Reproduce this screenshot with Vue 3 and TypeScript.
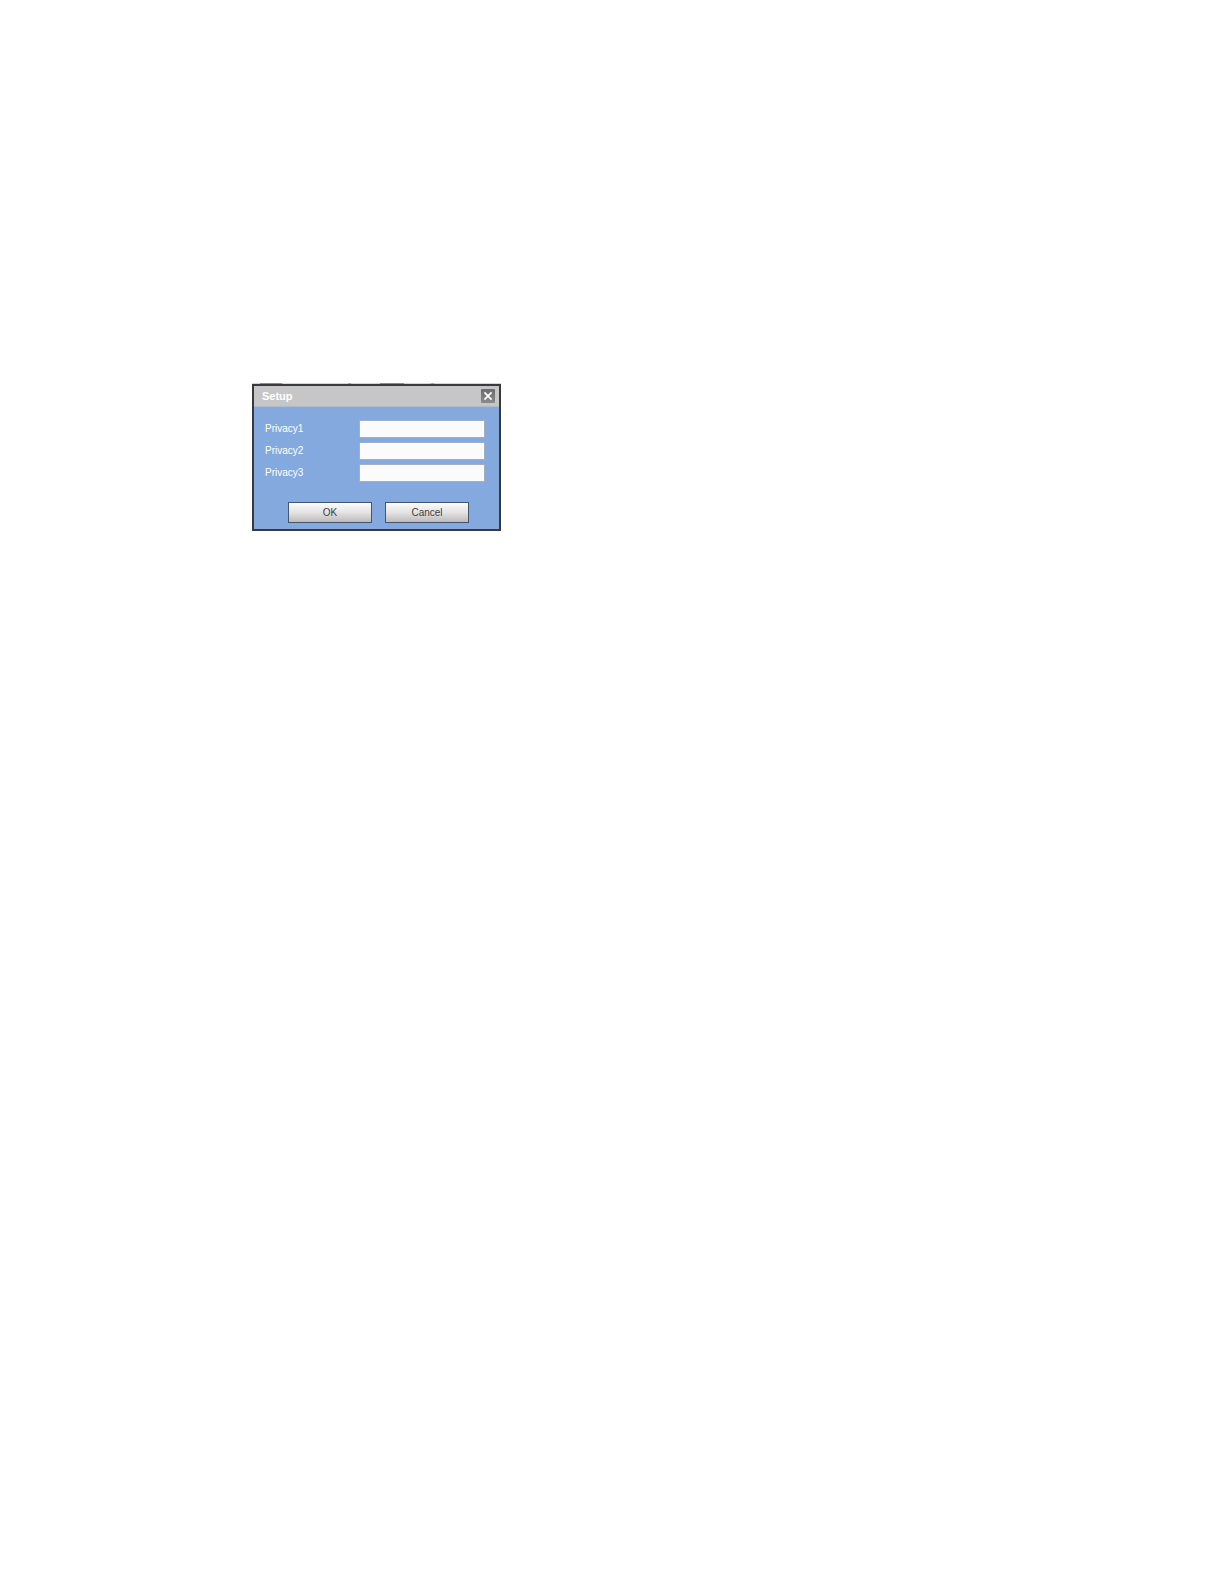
<script setup lang="ts">
import { reactive } from 'vue'

interface Field {
  id: string
  label: string
  value: string
}

const fields = reactive<Field[]>([
  { id: 'privacy1', label: 'Privacy1', value: '' },
  { id: 'privacy2', label: 'Privacy2', value: '' },
  { id: 'privacy3', label: 'Privacy3', value: '' },
])
</script>

<template>
  <main class="page">
    <form class="dialog" role="dialog" aria-labelledby="dialog-title" @submit.prevent>
      <header class="titlebar">
        <h1 id="dialog-title" class="title">Setup</h1>
        <button type="button" class="close" aria-label="Close">
          <svg viewBox="0 0 14 14" width="14" height="14" aria-hidden="true">
            <path d="M3.4 3.4 L10.6 10.6 M10.6 3.4 L3.4 10.6" stroke="#fff" stroke-width="1.7" fill="none" />
          </svg>
        </button>
      </header>
      <div class="fields">
        <div v-for="field in fields" :key="field.id" class="row">
          <label :for="field.id" class="label">{{ field.label }}</label>
          <input :id="field.id" v-model="field.value" type="text" class="input" />
        </div>
      </div>
      <footer class="actions">
        <button type="submit" class="button">OK</button>
        <button type="button" class="button">Cancel</button>
      </footer>
    </form>
  </main>
</template>

<style>
body {
  background: #fff;
}
</style>

<style scoped>
.page {
  padding: 383px 24px 24px 252px;
  font-family: "Liberation Sans", Arial, sans-serif;
  font-size: 10px;
  line-height: 12px;
}

/* The thin strip on top shows the edge of the window behind the dialog. */
.page::before {
  content: "";
  display: block;
  max-width: 249px;
  height: 1px;
  background:
    linear-gradient(#8c8c8c, #8c8c8c) 8px 0 / 22px 1px no-repeat,
    linear-gradient(#a0a0a0, #a0a0a0) 96px 0 / 3px 1px no-repeat,
    linear-gradient(#8c8c8c, #8c8c8c) 128px 0 / 24px 1px no-repeat,
    linear-gradient(#a0a0a0, #a0a0a0) 179px 0 / 3px 1px no-repeat,
    #d4d4d4;
}

.dialog {
  box-sizing: border-box;
  max-width: 249px;
  border: 2px solid #38393d;
  background: #84a9df;
}

.titlebar {
  display: flex;
  align-items: center;
  justify-content: space-between;
  padding: 3px 4px 3px 8px;
  background: #c6c6c6;
  border-bottom: 1px solid #b3bac5;
}

.title {
  margin: 0;
  font-size: 11px;
  line-height: 14px;
  font-weight: bold;
  color: #fff;
}

.close {
  display: flex;
  padding: 0;
  border: 0;
  border-radius: 1px;
  background: linear-gradient(#6c6c6c, #8a8a8a);
}

.fields {
  display: flex;
  flex-direction: column;
  gap: 4px;
  padding: 13px 14px 0 11px;
}

.row {
  display: flex;
  align-items: center;
  justify-content: space-between;
}

.label {
  color: #fff;
}

.input {
  box-sizing: border-box;
  width: 126px;
  height: 18px;
  padding: 0 3px;
  border: 1px solid #a3adc4;
  background: #fbfbfb;
  font: inherit;
}

.actions {
  display: flex;
  justify-content: center;
  gap: 13px;
  padding: 20px 0 6px 4px;
}

.button {
  box-sizing: border-box;
  width: 84px;
  height: 21px;
  padding: 0;
  border: 1px solid #46546c;
  background: linear-gradient(#fcfcfc, #e4e3e3 50%, #bcbaba);
  color: #3c3c3c;
  font: inherit;
}
</style>
